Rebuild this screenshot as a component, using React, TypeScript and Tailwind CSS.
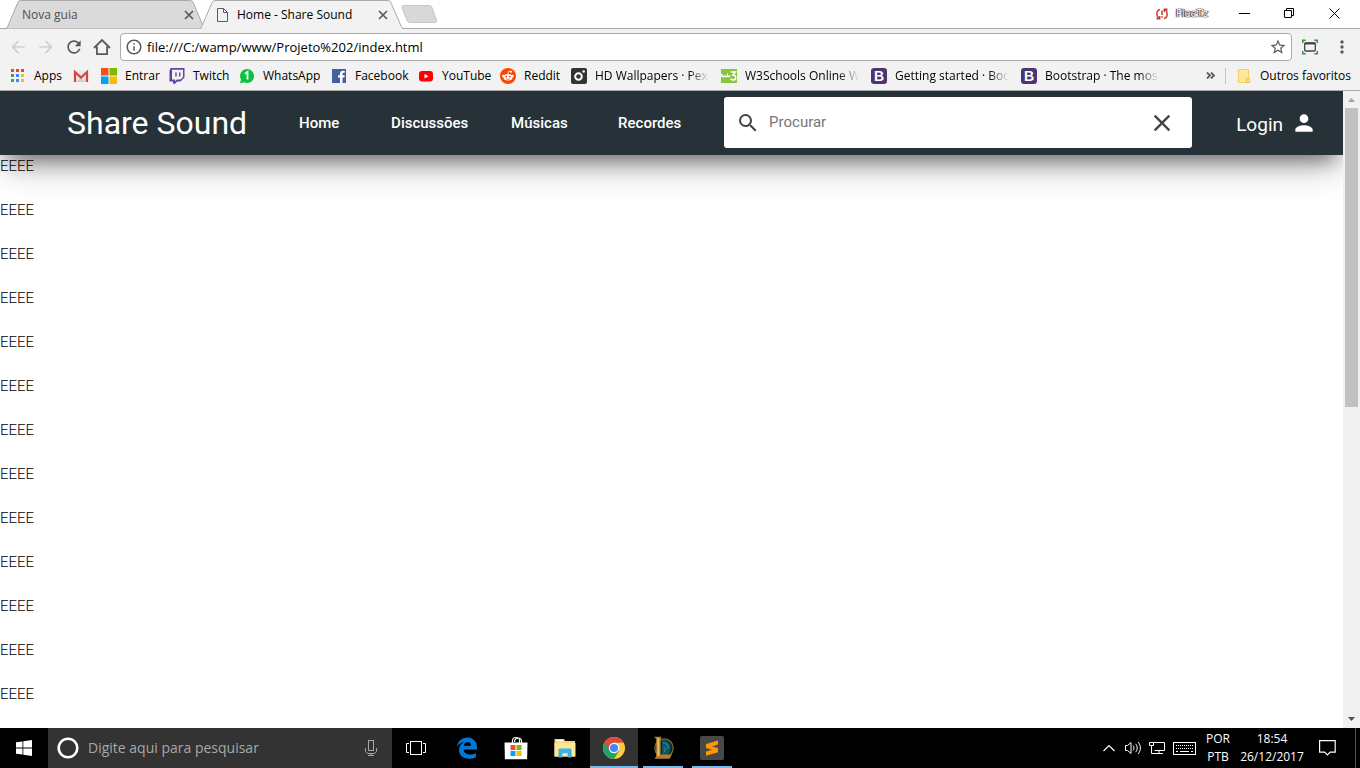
import type { ReactNode } from "react"
import {
    MdArrowBack,
    MdArrowForward,
    MdClose,
    MdInfoOutline,
    MdMoreVert,
    MdPerson,
    MdRefresh,
    MdSearch,
    MdStarBorder,
} from "react-icons/md"

/* ---------- bookmark icons ---------- */

function AppsIcon() {
    const colors = ["#ea4335", "#ea4335", "#ea4335", "#34a853", "#4285f4", "#fbbc05", "#34a853", "#4285f4", "#fbbc05"]
    return (
        <svg width="16" height="16" viewBox="0 0 16 16" shapeRendering="crispEdges">
            {colors.map((color, i) => (
                <rect key={i} x={1 + (i % 3) * 5} y={1 + Math.floor(i / 3) * 5} width="3" height="3" fill={color} />
            ))}
        </svg>
    )
}

function GmailIcon() {
    return (
        <svg width="16" height="16" viewBox="0 0 16 16">
            <rect x="1" y="3" width="14" height="11" fill="#e8e8e8" />
            <path d="M3 14 8 9l5 5z" fill="#d0d0d0" />
            <path d="M2 14V4L8 9.500 14 4v10" fill="none" stroke="#d9453a" strokeWidth="2.200" />
        </svg>
    )
}

function MicrosoftIcon() {
    return (
        <svg width="16" height="16" viewBox="0 0 16 16">
            <path d="M0 0h7.500v7.500H0z" fill="#f25022" />
            <path d="M8.500 0H16v7.500H8.500z" fill="#7fba00" />
            <path d="M0 8.500h7.500V16H0z" fill="#00a4ef" />
            <path d="M8.500 8.500H16V16H8.500z" fill="#ffb900" />
        </svg>
    )
}

function TwitchIcon() {
    return (
        <svg width="16" height="16" viewBox="0 0 16 16">
            <path d="M1.600 0H15.500v9.500L11.500 13.500H8.300L6 15.800H4v-2.300H.5V2.800z" fill="#6441a5" />
            <path d="M3 1.700h11v7.200L11.500 11.400H8L6 13.300v-1.900H3z" fill="#f2f2f2" />
            <path d="M6.300 4.500h1.400v4H6.300zM10 4.500h1.400v4H10z" fill="#6441a5" />
        </svg>
    )
}

function WhatsIcon() {
    return (
        <svg width="16" height="16" viewBox="0 0 16 16">
            <path d="M1 15.500 2 11.500A7 7 0 1 1 5 14.300z" fill="#0dc143" />
            <path d="M6 5.800 8.500 4v7.500" fill="none" stroke="#fff" strokeWidth="1.800" />
        </svg>
    )
}

function FacebookIcon() {
    return (
        <svg width="16" height="16" viewBox="0 0 16 16">
            <rect x="1" y="1" width="14" height="14" fill="#4460a0" />
            <path d="M9 15V9.500H7V7.200h2V5.600C9 3.700 10.200 2.700 12 2.700h1.700v2.100h-1.200c-.8 0-1 .4-1 1v1.400h2.200l-.3 2.300h-1.900V15z" fill="#fff" />
        </svg>
    )
}

function YoutubeIcon() {
    return (
        <svg width="16" height="16" viewBox="0 0 16 16">
            <rect x="1" y="3" width="14" height="10.500" rx="3" fill="#f00" />
            <path d="M6.500 6v4.500L10.500 8.200z" fill="#fff" />
        </svg>
    )
}

function RedditIcon() {
    return (
        <svg width="16" height="16" viewBox="0 0 16 16">
            <circle cx="8" cy="8" r="8" fill="#ff4500" />
            <ellipse cx="8" cy="9.300" rx="4.600" ry="3.300" fill="#fff" />
            <circle cx="3.300" cy="8" r="1.200" fill="#fff" />
            <circle cx="12.700" cy="8" r="1.200" fill="#fff" />
            <path d="M8 6.200 8.700 3.200l2.300.5" fill="none" stroke="#fff" strokeWidth=".8" />
            <circle cx="11.200" cy="3.700" r="1" fill="#fff" />
            <circle cx="6.200" cy="8.600" r=".9" fill="#ff4500" />
            <circle cx="9.800" cy="8.600" r=".9" fill="#ff4500" />
            <path d="M6 10.600c1 1 3 1 4 0" fill="none" stroke="#ff4500" strokeWidth=".7" />
        </svg>
    )
}

function PexelsIcon() {
    return (
        <svg width="16" height="16" viewBox="0 0 16 16">
            <rect width="16" height="16" rx="2" fill="#333" />
            <circle cx="7.500" cy="8.500" r="3.300" fill="none" stroke="#fff" strokeWidth="2" />
            <circle cx="12.700" cy="3.500" r="1.200" fill="#fff" />
        </svg>
    )
}

function SchoolsIcon() {
    return (
        <svg width="16" height="16" viewBox="0 0 16 16">
            <rect y="1" width="16" height="14" fill="#8ac53e" />
            <path d="M.8 6v1.500c0 1.500 2.500 1.500 2.800 0C4 9 6.200 9 6.500 7.500c.4 1.200 1.800 1.200 2.500.3" fill="none" stroke="#fff" strokeWidth="1.500" />
            <path d="M9.700 4h4.500L12 7c3.500-.3 3.500 5 0 5-1.300 0-2-.5-2.400-1.300" fill="none" stroke="#fff" strokeWidth="1.600" />
        </svg>
    )
}

function BootstrapIcon() {
    return (
        <span className="flex h-4 w-4 items-center justify-center rounded-[3px] bg-[#4d3573] font-['Liberation_Sans',sans-serif] text-sm leading-4 font-bold text-white">
            B
        </span>
    )
}

function FolderIcon() {
    return (
        <svg width="16" height="16" viewBox="0 0 16 16">
            <path d="M2.500 1.500h10v13h-10z" fill="#ffe79c" stroke="#f3cf63" />
            <path d="M10.500 10.500h3v4h-3z" fill="#ffe79c" stroke="#eabf3f" />
        </svg>
    )
}

/* ---------- taskbar icons ---------- */

function WindowsIcon() {
    return (
        <svg width="16" height="16" viewBox="0 0 16 16" fill="#fff">
            <path d="M0 2.300 6.500 1.400v6.200H0zM7.300 1.300 16 0v7.600H7.300zM0 8.400h6.500v6.200L0 13.700zM7.300 8.400H16V16l-8.700-1.300z" />
        </svg>
    )
}

function MicIcon() {
    return (
        <svg width="14" height="18" viewBox="0 0 14 18" fill="none" stroke="#a8a8a8">
            <rect x="4.500" y="1.500" width="5" height="10" />
            <path d="M1.500 9v3.500l2 2h7l2-2V9M7 14.500v2M4 16.500h6" />
        </svg>
    )
}

function TaskViewIcon() {
    return (
        <svg width="20" height="16" viewBox="0 0 20 16" fill="none" stroke="#fff">
            <rect x="4.500" y="1.500" width="11" height="13" />
            <path d="M3 3.500H.5v9H3M17 3.500h2.500v9H17" />
        </svg>
    )
}

function EdgeIcon() {
    return (
        <svg width="22" height="22" viewBox="0 0 22 22">
            <path
                d="M1 9.700C1.800 4 6 .5 11.300.5c6 0 9.700 4.500 9.700 9.700v2.300H7.600c.2 3.600 3.200 5 6.400 5 2.300 0 4.200-.6 5.900-1.600v4.300c-2 1-4.400 1.500-7 1.500C7 21.700 3 18.200 3 13c0-3.500 2-6.300 5.200-7.700C4.700 5.600 2.500 7.500 1 9.700zM7.800 8.800H15c0-2.200-1-3.800-3.400-3.800C9.600 5 8.200 6.400 7.800 8.800z"
                fill="#0078d7"
            />
        </svg>
    )
}

function StoreIcon() {
    return (
        <svg width="24" height="24" viewBox="0 0 24 24">
            <path d="M8.500 7V4.500C8.500.5 15.500.5 15.500 4.500V7M10.500 6c0-5 7-5 7-1v2" fill="none" stroke="#fff" strokeWidth="1.200" />
            <path d="M.5 6.500h23l-.4 16.700H.9z" fill="#fff" />
            <path d="M6.500 9h5v5h-5z" fill="#f25022" />
            <path d="M12.500 9h5v5h-5z" fill="#7fba00" />
            <path d="M6.500 15h5v5h-5z" fill="#00a4ef" />
            <path d="M12.500 15h5v5h-5z" fill="#ffb900" />
        </svg>
    )
}

function ExplorerIcon() {
    return (
        <svg width="22" height="20" viewBox="0 0 22 20">
            <path d="M.5 1h9.500l1 2h10v15.500H.5z" fill="#f8d775" />
            <path d="M2.500 2h6v1.300h-6z" fill="#fff" />
            <path d="M.5 5h21v13.500H.5z" fill="#fde79a" />
            <path d="M4.500 19.500v-8l1-1h11l1 1v8h-3.800v-4.300H8.300v4.300z" fill="#3db2e6" />
        </svg>
    )
}

function ChromeIcon() {
    return (
        <svg width="22" height="22" viewBox="0 0 22 22">
            <circle cx="11" cy="11" r="11" fill="#ffcd40" />
            <path d="M11 11 1.500 5.500A11 11 0 0 0 11 22l5.300-8.500z" fill="#1da462" />
            <path d="M1.500 5.500A11 11 0 0 1 20.600 5.800H11L6.200 13.600z" fill="#dd4b3e" />
            <circle cx="11" cy="11" r="5.200" fill="#fff" />
            <circle cx="11" cy="11" r="4.100" fill="#4687f4" />
        </svg>
    )
}

function LeagueIcon() {
    return (
        <svg width="22" height="24" viewBox="0 0 22 24">
            <circle cx="12" cy="12" r="9.200" fill="#07262f" stroke="#8c6a2d" strokeWidth="1.200" />
            <path d="M10 4c6 0 9.500 4 8.500 9.500-.5 2.500-2 4.500-3.500 5.500H10z" fill="#0f5364" />
            <path d="M11 7c4 0 6 3 4.500 6M11 11c2 0 3 2 1.500 5" fill="none" stroke="#2a8a98" strokeWidth="1.200" />
            <path d="M2 .8h7.500L8.700 3v15.500H20l-2.500 4.300H2.500l1.700-2.500V3z" fill="#b07f2f" />
            <path d="M5.300 2h2v18h-2z" fill="#e3c06a" />
        </svg>
    )
}

function SublimeIcon() {
    return (
        <svg width="24" height="24" viewBox="0 0 24 24">
            <rect width="24" height="24" rx="2" fill="#484848" />
            <path d="M6 8 18 4.500v4.100l-6 1.900 6 1.600v4.100L6 19.700v-4.100l6-1.900-6-1.600z" fill="#ff9800" />
        </svg>
    )
}

function TrayButton({ label, children }: { label: string; children: ReactNode }) {
    return (
        <button type="button" aria-label={label} className="flex h-full w-6 items-center justify-center">
            {children}
        </button>
    )
}

/* ---------- browser ---------- */

const bookmarks = [
    { name: "Apps", icon: <AppsIcon />, width: "w-[27px]" },
    { name: "", label: "Gmail", icon: <GmailIcon />, width: "hidden" },
    { name: "Entrar", icon: <MicrosoftIcon />, width: "w-8" },
    { name: "Twitch", icon: <TwitchIcon />, width: "w-[34px]" },
    { name: "WhatsApp", icon: <WhatsIcon />, width: "w-14" },
    { name: "Facebook", icon: <FacebookIcon />, width: "w-[51px]" },
    { name: "YouTube", icon: <YoutubeIcon />, width: "w-[46px]" },
    { name: "Reddit", icon: <RedditIcon />, width: "w-[35px]" },
    { name: "HD Wallpapers · Pexe", icon: <PexelsIcon />, width: "w-[114px]", long: true },
    { name: "W3Schools Online We", icon: <SchoolsIcon />, width: "w-[114px]", long: true },
    { name: "Getting started · Boot", icon: <BootstrapIcon />, width: "w-[114px]", long: true },
    { name: "Bootstrap · The most", icon: <BootstrapIcon />, width: "w-[114px]", long: true },
]

function Tab({ title, active = false }: { title: string; active?: boolean }) {
    return (
        <div className={active ? "relative z-10 -ml-2 h-[29px] w-[206px]" : "relative h-[29px] w-[202px]"}>
            <svg className="absolute inset-0 h-full w-full" viewBox="0 0 208 29" preserveAspectRatio="none">
                <path
                    d="M0 28.500C2 28.500 2 28 3 26L13 3Q14 .5 16 .5H191Q193 .5 194 3L204 26C205 28 205 28.500 208 28.500"
                    fill={active ? "#f2f2f2" : "#dadada"}
                    stroke="#a9a9a9"
                />
                {active && <path d="M3 28.500H205" stroke="#f2f2f2" strokeWidth="1.500" />}
            </svg>
            <div className={active ? "relative flex h-full items-center gap-2 pl-4 pr-4" : "relative flex h-full items-center pl-[17px] pr-3"}>
                {active && (
                    <svg width="14" height="14" viewBox="0 0 14 14" fill="none" stroke="#5a5a5a">
                        <path d="M2.500.5h6l4 4v9h-10zM8.500.5v4h4" />
                    </svg>
                )}
                <span className={active ? "flex-1 truncate text-black" : "flex-1 truncate text-[#505050]"}>{title}</span>
                <button type="button" aria-label={"Fechar " + title} className="text-[#5a5a5a]">
                    <svg width="12" height="12" viewBox="0 0 12 12" stroke="currentColor" strokeWidth="1.700">
                        <path d="M2 2l8 8M10 2l-8 8" />
                    </svg>
                </button>
            </div>
        </div>
    )
}

function BrowserTop() {
    return (
        <header className="shrink-0 bg-[#f2f2f2] font-['Open_Sans',sans-serif] text-xs text-black">
            <div className="flex h-[29px] border-b border-[#a9a9a9] bg-white pl-[5px]">
                <Tab title="Nova guia" />
                <Tab title="Home - Share Sound" active />
                <button type="button" aria-label="Nova aba" className="-ml-[5px] flex items-center">
                    <svg width="38" height="18" viewBox="0 0 38 18">
                        <path d="M4 .5H29Q31 .5 32 2.500L36.500 15Q37 17.500 35 17.500H10Q8 17.500 7 15.500L2 2.500Q1.500.5 4 .5z" fill="#d8d8d8" stroke="#c6c6c6" />
                    </svg>
                </button>
                <div className="ml-auto mr-[3px] flex h-[27px] items-center">
                    <button type="button" className="mr-3.5 flex items-center gap-2 text-[11px] text-white [text-shadow:0_0_1px_#222,0_0_1px_#222,1px_0_1px_#444,-1px_0_1px_#444]">
                        <svg width="12" height="12" viewBox="0 0 12 12" fill="none" stroke="#cf3a30" strokeWidth="1.500">
                            <path d="M4 1.500C0 2 0 9 3 10.500M.5 10.800h3.200V8M8 10.500C12 10 12 3 9 1.500M11.500 1.200H8.300V4M6 2.500v4.500M6 8.300v1.500" />
                        </svg>
                        FleeTz
                    </button>
                    <button type="button" aria-label="Minimizar" className="flex w-[45px] justify-center">
                        <svg width="11" height="11" viewBox="0 0 11 11" stroke="#000"><path d="M0 5.500H11" /></svg>
                    </button>
                    <button type="button" aria-label="Restaurar" className="flex w-[45px] justify-center">
                        <svg width="11" height="11" viewBox="0 0 11 11" fill="none" stroke="#000"><path d="M.5 2.500h7v7h-7zM2.500 2.500v-2h7v7h-2" /></svg>
                    </button>
                    <button type="button" aria-label="Fechar" className="flex w-[45px] justify-center">
                        <svg width="11" height="11" viewBox="0 0 11 11" stroke="#000"><path d="M.5.5l10 10M10.500.5l-10 10" /></svg>
                    </button>
                </div>
            </div>

            <div className="flex h-9 items-center pl-2 text-xl text-[#5a5a5a]">
                <button type="button" aria-label="Voltar" className="w-7 text-[#d0d0d0]"><MdArrowBack /></button>
                <button type="button" aria-label="Avançar" className="w-7 text-[#d0d0d0]"><MdArrowForward /></button>
                <button type="button" aria-label="Atualizar" className="w-7"><MdRefresh /></button>
                <button type="button" aria-label="Página inicial" className="w-7">
                    <svg width="20" height="20" viewBox="0 0 20 20" fill="none" stroke="currentColor" strokeWidth="1.800">
                        <path d="M2 11 10 3l8 8M4.900 9.500v7.600h10.200V9.500" />
                    </svg>
                </button>
                <div className="flex h-7 flex-1 items-center gap-1 rounded-sm border border-[#a9a9a9] bg-white pl-1 pr-1">
                    <MdInfoOutline className="h-[18px] w-[18px] shrink-0" />
                    <input
                        type="text"
                        aria-label="Endereço"
                        defaultValue="file:///C:/wamp/www/Projeto%202/index.html"
                        className="min-w-0 flex-1 text-[13px] text-black outline-none"
                    />
                    <button type="button" aria-label="Favoritar" className="text-[18px]"><MdStarBorder /></button>
                </div>
                <button type="button" aria-label="Captura de tela" className="flex w-9 justify-center">
                    <svg width="16" height="16" viewBox="0 0 16 16" fill="none">
                        <path d="M.7 4V1.200h3M12.300 1.200h3V4M15.300 12v2.800h-3M3.700 14.800h-3V12" stroke="#3f8f3a" strokeWidth="1.500" />
                        <rect x="2.700" y="4" width="10.600" height="8" rx="1" stroke="#444" strokeWidth="1.300" />
                        <path d="M2.700 4.500h10.600" stroke="#444" strokeWidth="2" />
                    </svg>
                </button>
                <button type="button" aria-label="Menu" className="mr-1 flex w-7 justify-center"><MdMoreVert /></button>
            </div>

            <nav className="flex h-[26px] items-center border-b border-[#a9a9a9] pb-1 pl-2.5 pr-3">
                <div className="flex min-w-0 items-center gap-3">
                    {bookmarks.map((item, i) => (
                        <a key={i} href="#" aria-label={item.label} className="flex shrink-0 items-center gap-2">
                            {item.icon}
                            <span className={`${item.width} whitespace-nowrap ${item.long ? "overflow-hidden [mask-image:linear-gradient(to_right,#000_82%,transparent)]" : ""}`}>
                                {item.name}
                            </span>
                        </a>
                    ))}
                </div>
                <button type="button" aria-label="Mais favoritos" className="ml-auto flex w-6 justify-center">
                    <svg width="9" height="7" viewBox="0 0 9 7" fill="none" stroke="#5a5a5a" strokeWidth="1.800"><path d="M1 .5l3 3-3 3M5 .5l3 3-3 3" /></svg>
                </button>
                <a href="#" className="ml-[3px] flex items-center gap-2 whitespace-nowrap border-l border-[#c4c4c4] pl-2.5">
                    <FolderIcon />
                    <span className="w-[88px]">Outros favoritos</span>
                </a>
            </nav>
        </header>
    )
}

/* ---------- site ---------- */

function Navbar() {
    return (
        <nav className="relative flex h-16 shrink-0 items-center bg-[#263238] pl-[67px] pr-[26px] text-[15px] font-medium text-white shadow-[0_12px_20px_-8px_rgba(0,0,0,0.45),0_14px_36px_-4px_rgba(0,0,0,0.3)]">
            <a href="#" className="mr-[52px] whitespace-nowrap text-[32px] font-normal">Share Sound</a>
            <a href="#" className="w-[92px]">Home</a>
            <a href="#" className="w-[120px]">Discussões</a>
            <a href="#" className="w-[107px]">Músicas</a>
            <a href="#" className="w-[106px]">Recordes</a>
            <form className="mb-px flex h-[51px] flex-1 items-center rounded-[3px] bg-white pl-3 pr-4 text-[#444]">
                <label htmlFor="search" aria-label="Procurar" className="text-2xl"><MdSearch /></label>
                <input
                    id="search"
                    type="text"
                    placeholder="Procurar"
                    className="ml-[9px] min-w-0 flex-1 text-[15px] font-normal outline-none placeholder:text-[#757575]"
                />
                <button type="reset" aria-label="Limpar" className="text-[28px]"><MdClose /></button>
            </form>
            <a href="#" className="ml-11 mt-1 flex items-center gap-2 text-[19px] font-normal">
                Login
                <MdPerson className="mb-1 h-[26px] w-[26px]" />
            </a>
        </nav>
    )
}

function SharePage() {
    const lines = Array.from({ length: 13 }, () => "EEEE")

    return (
        <div className="flex min-w-0 flex-1 flex-col overflow-hidden bg-white font-[Roboto,sans-serif]">
            <Navbar />
            <main className="min-h-0 flex-1 overflow-hidden text-[15px] font-light leading-[22px] text-black">
                {lines.map((line, i) => (
                    <p key={i} className="mb-[22px]">{line}</p>
                ))}
            </main>
        </div>
    )
}

function Scrollbar() {
    return (
        <div className="flex w-[17px] shrink-0 flex-col items-center bg-[#f1f1f1]">
            <svg width="17" height="17" viewBox="0 0 17 17"><path d="M5 11 8.500 7l3.500 4z" fill="#a3a3a3" /></svg>
            <div className="h-[47%] w-[13px] bg-[#c1c1c1]" />
            <svg className="mt-auto" width="17" height="17" viewBox="0 0 17 17"><path d="M5 6 8.500 10 12 6z" fill="#505050" /></svg>
        </div>
    )
}

/* ---------- taskbar ---------- */

const programs = [
    { name: "Edge", icon: <EdgeIcon />, style: "" },
    { name: "Loja", icon: <StoreIcon />, style: "" },
    { name: "Explorador de arquivos", icon: <ExplorerIcon />, style: "" },
    { name: "Chrome", icon: <ChromeIcon />, style: "bg-[#333]", line: "w-full" },
    { name: "League of Legends", icon: <LeagueIcon />, style: "", line: "w-10" },
    { name: "Sublime Text", icon: <SublimeIcon />, style: "", line: "w-10" },
]

function Taskbar() {
    return (
        <footer className="flex h-10 shrink-0 bg-black font-['Open_Sans',sans-serif] text-xs text-white">
            <button type="button" aria-label="Iniciar" className="flex w-12 items-center justify-center"><WindowsIcon /></button>
            <div className="flex w-[344px] items-center bg-[#333] pl-2 pr-3.5">
                <svg width="24" height="24" viewBox="0 0 24 24"><circle cx="12" cy="12" r="9.300" fill="none" stroke="#fff" strokeWidth="2.600" /></svg>
                <input
                    type="text"
                    aria-label="Pesquisar no Windows"
                    placeholder="Digite aqui para pesquisar"
                    className="ml-2 min-w-0 flex-1 text-sm outline-none placeholder:text-[#a8a8a8]"
                />
                <button type="button" aria-label="Microfone"><MicIcon /></button>
            </div>
            <button type="button" aria-label="Visão de tarefas" className="mr-0.5 flex w-12 items-center justify-center"><TaskViewIcon /></button>
            {programs.map((program) => (
                <button key={program.name} type="button" aria-label={program.name} className={`relative ml-px flex w-12 items-center justify-center ${program.style}`}>
                    {program.icon}
                    {program.line && <span className={`absolute bottom-0 h-0.5 bg-[#76b9ed] ${program.line}`} />}
                </button>
            ))}

            <div className="ml-auto flex items-center text-center leading-[18px]">
                <TrayButton label="Ícones ocultos">
                    <svg width="12" height="8" viewBox="0 0 12 8" fill="none" stroke="#fff" strokeWidth="1.200"><path d="M.5 7 6 1.500 11.500 7" /></svg>
                </TrayButton>
                <TrayButton label="Volume">
                    <svg width="18" height="16" viewBox="0 0 18 16" fill="none" stroke="#fff">
                        <path d="M1.500 5.500h2L7 2.500v11l-3.500-3h-2zM9 5.500c1.300 1.500 1.300 3.500 0 5M11.500 3.800c2.300 2.500 2.300 5.900 0 8.400M14 2c3.200 3.500 3.200 8.500 0 12" />
                    </svg>
                </TrayButton>
                <TrayButton label="Rede">
                    <svg width="16" height="14" viewBox="0 0 16 14" fill="none" stroke="#fff">
                        <path d="M5 1.500h10.500v8h-10M10 9.500V13M6 12.500h8M.5 1.500h4v3h-4zM2.500 4.500v8H6" />
                    </svg>
                </TrayButton>
                <button type="button" aria-label="Teclado" className="ml-1 mr-2.5">
                    <svg width="23" height="13" viewBox="0 0 23 13" fill="none" stroke="#fff">
                        <rect x=".5" y=".5" width="22" height="12" />
                        <path d="M3 3.500H20M3 6.500H20" strokeDasharray="1 1" />
                        <path d="M3 9.500h2M7 9.500h9M18 9.500h2" />
                    </svg>
                </button>
                <button type="button" className="w-6">POR<br />PTB</button>
                <button type="button" className="ml-2.5 w-[64px]">18:54<br />26/12/2017</button>
                <button type="button" aria-label="Notificações" className="ml-[11px] mr-4 flex w-6 justify-center">
                    <svg width="17" height="16" viewBox="0 0 17 16" fill="none" stroke="#fff" strokeWidth="1.200"><path d="M.6.6h15.600v11.600h-5L8.400 15l-2.800-2.800h-5z" /></svg>
                </button>
                <div className="h-10 w-[5px] border-l border-[#555]" />
            </div>
        </footer>
    )
}

export default function App() {
    return (
        <div className="flex h-screen flex-col overflow-hidden bg-white">
            <BrowserTop />
            <div className="flex min-h-0 flex-1">
                <SharePage />
                <Scrollbar />
            </div>
            <Taskbar />
        </div>
    )
}
